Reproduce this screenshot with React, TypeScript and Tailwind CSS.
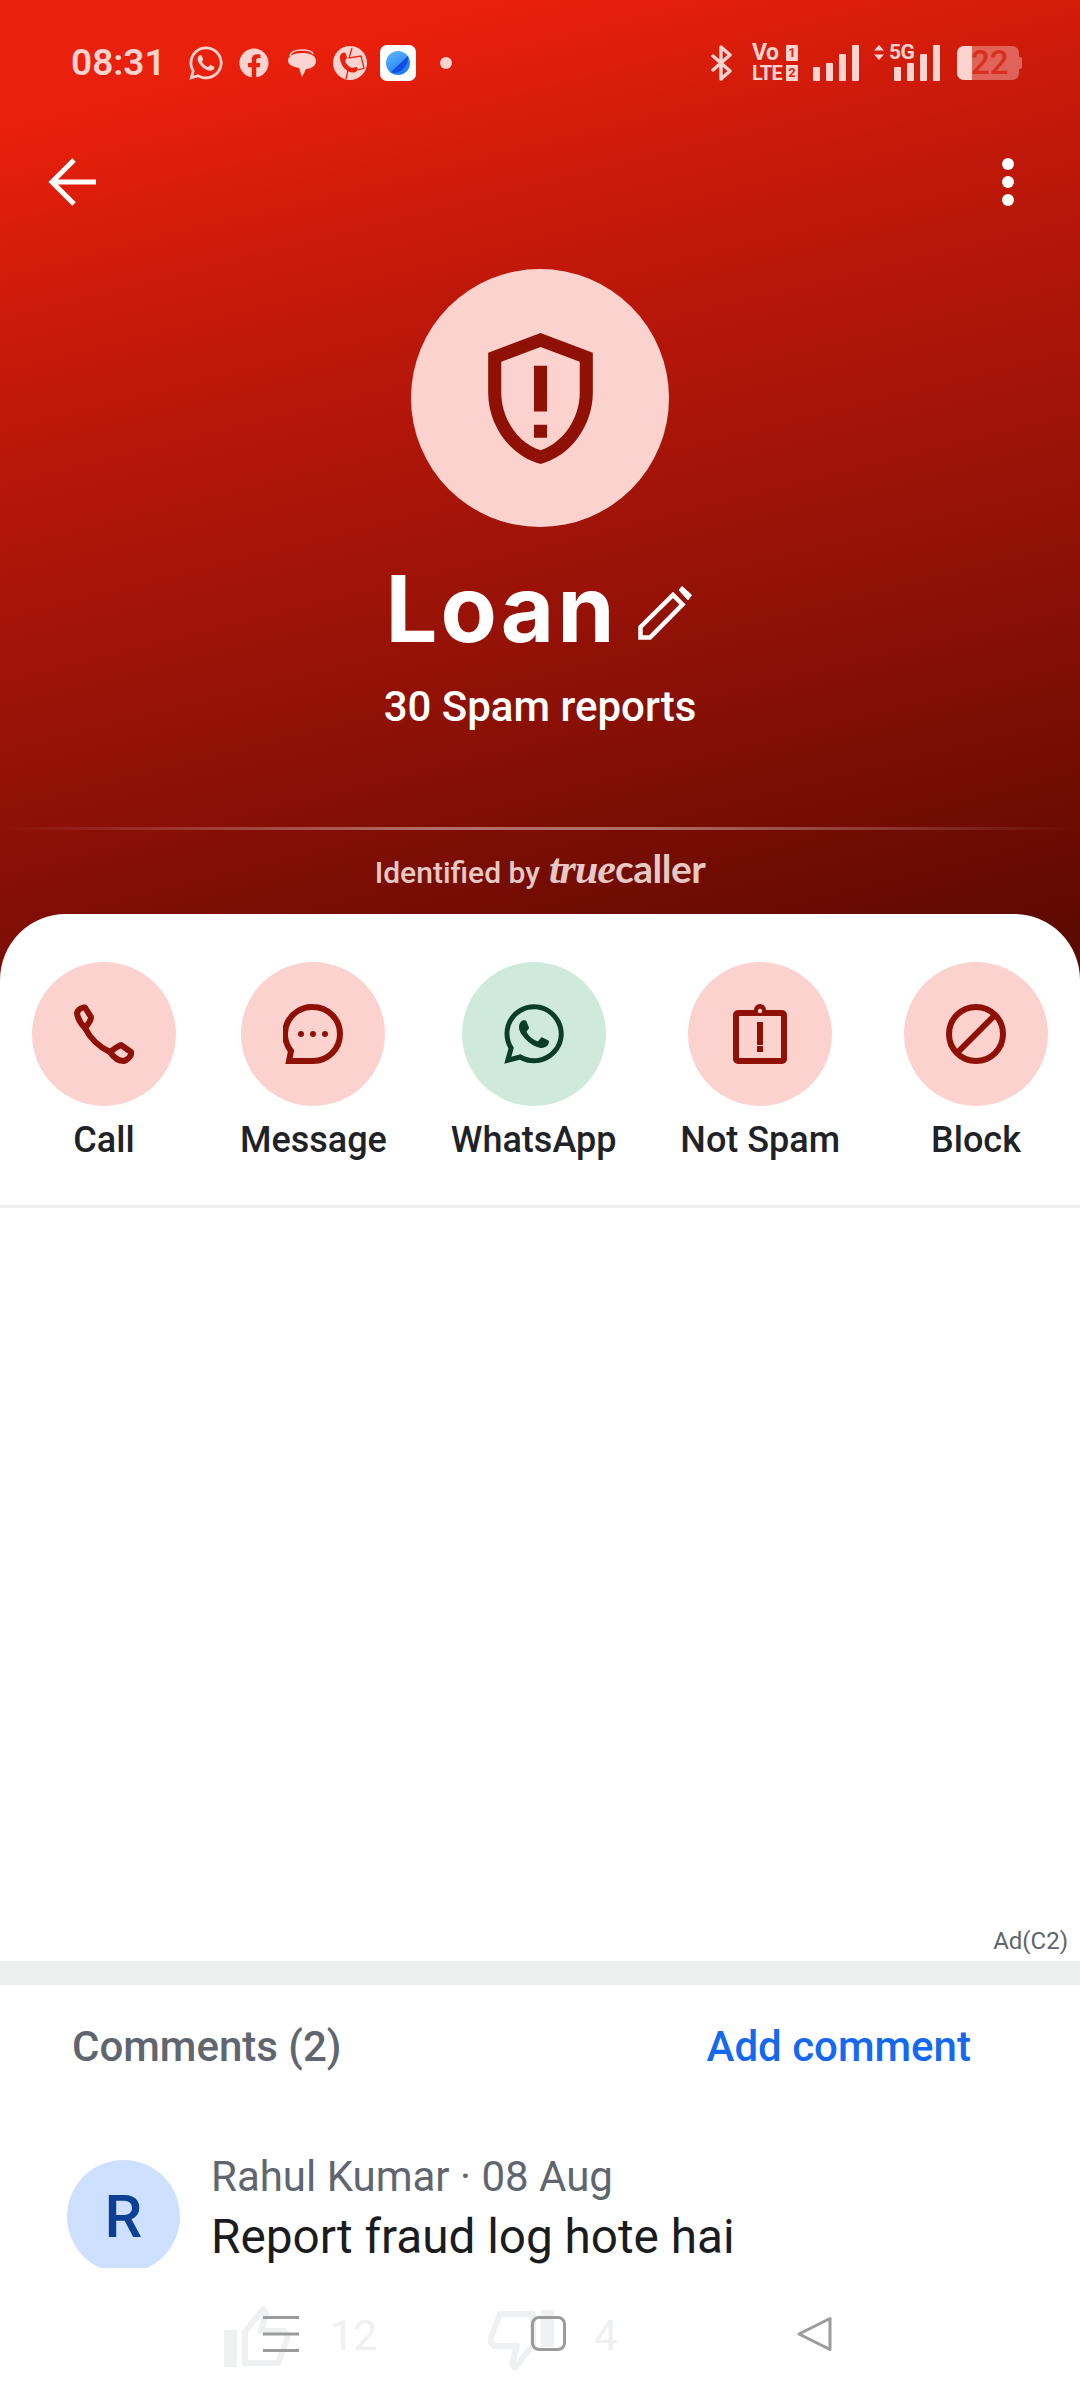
import React from "react";
import { FaWhatsapp, FaFacebook } from "react-icons/fa";

const Bars = () => (
  <div className="flex items-end gap-[6px] h-[36px]">
    <div className="w-[7px] h-[14px] rounded-[1px] bg-[#fdd3cf]" />
    <div className="w-[7px] h-[18px] rounded-[1px] bg-[#fdd3cf]" />
    <div className="w-[7px] h-[27px] rounded-[1px] bg-[#fdd3cf]" />
    <div className="w-[7px] h-[36px] rounded-[1px] bg-[#fdd3cf]" />
  </div>
);

const StatusBar = () => (
  <div className="flex items-center h-[36px] mt-[45px] pl-[71px] font-['Roboto',sans-serif] text-[#fdd3cf]">
    <span className="w-[91px] text-[37px] leading-[36px] font-semibold whitespace-nowrap">08:31</span>
    <FaWhatsapp className="ml-[25px] w-[38px] h-[38px]" />
    <FaFacebook className="ml-[14px] w-[30px] h-[30px]" />
    <svg viewBox="0 0 29 28" className="ml-[18px] w-[29px] h-[28px]">
      <path d="M3 7C4 2 9 1 15 1s10 1 11 4" fill="none" stroke="#fdd3cf" strokeWidth="1.6" />
      <path d="M15 4c8 0 14 2.500 14 8s-6 8-10 8l-4 8-3-9C6 18 1 16 1 11.500 1 7 7 4 15 4z" fill="#fdd3cf" />
    </svg>
    <svg viewBox="0 0 34 34" className="ml-[17px] w-[34px] h-[34px]">
      <circle cx="17" cy="17" r="17" fill="#fdd3cf" />
      <path d="M8 8c2-2 4-2 5 0l1 4-2 3c1 3 4 6 7 7l4-1c2 0 2 2 1 4-4 3-9 1-12-2S5 12 8 8z" fill="#e9200c" />
      <path d="M19 2l-3 10 12-2 3 12-6 2M15 24l-2 9" fill="none" stroke="#e9200c" strokeWidth="1.300" />
    </svg>
    <div className="ml-[13px] w-[36px] h-[36px] rounded-[7px] bg-white flex items-center justify-center">
      <svg viewBox="0 0 28 28" className="w-[28px] h-[28px]">
        <defs>
          <linearGradient id="planet" x1="0.2" y1="0" x2="0.8" y2="1">
            <stop offset="0" stopColor="#5cb6ff" />
            <stop offset="1" stopColor="#1a73f5" />
          </linearGradient>
        </defs>
        <circle cx="14" cy="14" r="12" fill="url(#planet)" />
        <path d="M6.500 23.500L24 7c2 8-7 19-17.500 16.500z" fill="#0f4fe0" />
      </svg>
    </div>
    <div className="ml-[24px] w-[12px] h-[12px] rounded-full bg-[#fdd3cf]" />

    <svg viewBox="0 0 21 36" className="ml-[259px] w-[21px] h-[36px]">
      <path d="M2 11l17 15-9 8V2l9 8L2 25" fill="none" stroke="#fdd3cf" strokeWidth="3.400" strokeLinecap="round" strokeLinejoin="round" />
    </svg>
    <div className="ml-[20px] w-[46px] h-[36px] flex flex-col justify-between font-bold leading-[16px]">
      <div className="flex justify-between items-center h-[16px]">
        <span className="text-[23px] leading-[16px] tracking-[-0.5px]">Vo</span>
        <span className="w-[12px] h-[16px] rounded-[1px] bg-[#fdd3cf] text-[#e9200c] text-[13px] leading-[16px] text-center">1</span>
      </div>
      <div className="flex justify-between items-center h-[16px]">
        <span className="tracking-[-0.8px] text-[20px] leading-[16px]">LTE</span>
        <span className="w-[12px] h-[16px] bg-[#fdd3cf] text-[#e9200c] text-[13px] leading-[16px] text-center">2</span>
      </div>
    </div>
    <div className="ml-[15px]">
      <Bars />
    </div>
    <div className="relative ml-[15px] w-[66px] h-[36px] flex items-end justify-end">
      <Bars />
      <svg viewBox="0 0 10 15" className="absolute left-0 top-0 w-[10px] h-[15px]">
        <path d="M5 0l5 5.500H0zM5 15L0 9.500h10z" fill="#fdd3cf" />
      </svg>
      <span className="absolute left-[15px] top-[-1px] text-[21px] leading-[17px] font-bold tracking-[-0.5px]">5G</span>
    </div>
    <div className="relative ml-[17px] w-[65px] h-[34px] flex">
      <div className="w-[62px] h-[34px] rounded-[7px] bg-[#fdd3cf]/40 overflow-hidden">
        <div className="w-[15px] h-[34px] bg-[#fdd3cf]" />
      </div>
      <div className="w-[3px] h-[12px] mt-[11px] rounded-r-[2px] bg-[#fdd3cf]/40" />
      <span className="absolute left-[14px] top-0 text-[33px] leading-[34px] font-medium text-[#d92f20]">22</span>
    </div>
  </div>
);

const Toolbar = () => (
  <div className="flex items-center justify-between h-[48px] mt-[77px] pl-[48px] pr-[66px]">
    <svg viewBox="0 0 48 48" className="w-[48px] h-[48px]">
      <path d="M48 24H4M26 2L4 24l22 22" fill="none" stroke="#ffffff" strokeWidth="5" />
    </svg>
    <div className="flex flex-col gap-[6px]">
      <div className="w-[12px] h-[12px] rounded-full bg-white" />
      <div className="w-[12px] h-[12px] rounded-full bg-white" />
      <div className="w-[12px] h-[12px] rounded-full bg-white" />
    </div>
  </div>
);

const Title = () => (
  <div className="flex flex-col items-center mt-[63px]">
    <div className="w-[258px] h-[258px] rounded-full bg-[#fbd2ce] flex items-center justify-center">
      <svg viewBox="0 0 24 24" className="w-[157px] h-[157px]">
        <path
          fill="#8f1105"
          d="M12,2L4,5v6.090c0,5.050,3.410,9.760,8,10.910c4.590-1.150,8-5.860,8-10.910V5L12,2z M18,11.090c0,4-2.550,7.700-6,8.830 c-3.450-1.130-6-4.820-6-8.830v-4.700l6-2.250l6,2.250V11.090z M11,16h2v2h-2V16z M11,7h2v7h-2V7z"
        />
      </svg>
    </div>
    <div className="flex items-center h-[110px] mt-[27px] mr-[3px]">
      <span className="font-['Inter',sans-serif] font-bold text-[92px] leading-[110px] text-white tracking-[3px]">Loan</span>
      <svg viewBox="0 0 54 54" className="ml-[20px] mt-[8px] w-[54px] h-[54px]">
        <path d="M2.500 41L35 9l9.500 9.500L12 51.500H2.500z" fill="none" stroke="#ffffff" strokeWidth="4.500" strokeLinejoin="miter" />
        <path d="M41 4l3-3.500 9.500 8.500-3.500 5z" fill="#ffffff" stroke="#ffffff" strokeWidth="1" strokeLinejoin="round" />
      </svg>
    </div>
    <div className="mt-[19px] font-['Roboto',sans-serif] font-medium text-[42px] leading-[48px] text-white">30 Spam reports</div>
  </div>
);

const Identified = () => (
  <div className="flex flex-col items-center mt-[96px]">
    <div className="w-full h-[3px] bg-[linear-gradient(90deg,transparent,#ffffff66_40%,#ffffff66_60%,transparent)]" />
    <div className="flex items-baseline mt-[18px] h-[40px] text-[#e6c8c6] font-['Roboto',sans-serif] text-[30px] leading-[40px] font-medium">
      <span>Identified by</span>
      <span className="ml-[9px] font-['Liberation_Serif',serif] italic font-bold text-[42px] leading-[40px] tracking-[-1px]">true</span>
      <span className="font-['Lato',sans-serif] font-bold text-[39px] leading-[40px] tracking-[-0.5px]">caller</span>
    </div>
  </div>
);

const icons = {
  call: (
    <svg viewBox="0 0 60 60" className="w-[60px] h-[60px]">
      <g fill="none" stroke="#8f1105" strokeWidth="6" strokeLinejoin="round">
        <path d="M3 9Q4 5 9 3.500L11 3.500L17 13Q17 17 11 24Q4 17 3 9Z" />
        <path d="M11 24Q19 40 36 48" />
        <path d="M36 48Q42 43 47 41L57 48Q58 52 52 56L50 57Q42 57 36 48Z" />
      </g>
    </svg>
  ),
  message: (
    <svg viewBox="0 0 60 60" className="w-[60px] h-[60px]">
      <path d="M30 3A27 27 0 0 1 30 57H6L8 47A27 27 0 0 1 30 3Z" fill="none" stroke="#8f1105" strokeWidth="6" />
      <circle cx="18" cy="30" r="3" fill="#8f1105" />
      <circle cx="30" cy="30" r="3" fill="#8f1105" />
      <circle cx="42" cy="30" r="3" fill="#8f1105" />
    </svg>
  ),
  whatsapp: <FaWhatsapp className="w-[68px] h-[68px] text-[#0c3d28]" />,
  notSpam: (
    <svg viewBox="0 0 54 60" className="w-[54px] h-[60px]">
      <rect x="3" y="9" width="48" height="48" rx="2" fill="none" stroke="#8f1105" strokeWidth="6" />
      <circle cx="27" cy="6" r="6" fill="#8f1105" />
      <circle cx="27" cy="7" r="2.200" fill="#fbd2ce" />
      <rect x="24" y="18" width="6" height="23" fill="#8f1105" />
      <rect x="24" y="42" width="6" height="6" fill="#8f1105" />
    </svg>
  ),
  block: (
    <svg viewBox="0 0 60 60" className="w-[60px] h-[60px]">
      <circle cx="30" cy="30" r="27" fill="none" stroke="#8f1105" strokeWidth="6" />
      <path d="M49 11L11 49" stroke="#8f1105" strokeWidth="6" />
    </svg>
  ),
};

const Action = ({ icon, label, green }: { icon: React.ReactNode; label: string; green?: boolean }) => (
  <div className="flex flex-col items-center">
    <div className={`w-[144px] h-[144px] rounded-full flex items-center justify-center ${green ? "bg-[#cfeadc]" : "bg-[#fbd2ce]"}`}>{icon}</div>
    <span className="mt-[10px] font-['Roboto',sans-serif] font-[480] text-[36px] leading-[48px] text-[#1f2328] whitespace-nowrap">{label}</span>
  </div>
);

const Thumb = ({ down }: { down?: boolean }) => (
  <svg viewBox="0 0 66 62" className={`w-[66px] h-[62px] ${down ? "rotate-180 mt-[10px]" : ""}`}>
    <rect x="0" y="25" width="13" height="37" fill="#eef0f1" />
    <path d="M21 58V27L39 4l3 4-5 18h23l4 6-10 26z" fill="none" stroke="#eef0f1" strokeWidth="6" strokeLinejoin="round" />
  </svg>
);

const NavBar = () => (
  <div className="absolute left-0 right-0 bottom-0 h-[132px] bg-white font-['Roboto',sans-serif]">
    <div className="flex items-center pl-[224px] pt-[35px] h-[100px]">
      <Thumb />
      <span className="ml-[40px] w-[50px] text-[42px] leading-[50px] text-[#eef0f1]">12</span>
      <div className="ml-[108px]">
        <Thumb down />
      </div>
      <span className="ml-[40px] text-[42px] leading-[50px] text-[#eef0f1]">4</span>
    </div>
    <svg viewBox="0 0 36 36" className="absolute left-[263px] top-[48px] w-[36px] h-[36px]">
      <path d="M0 1.500H36M0 18H36M0 34.500H36" stroke="#9b9b9b" strokeWidth="3" />
    </svg>
    <div className="absolute left-[531px] top-[48px] w-[35px] h-[35px] rounded-[8px] border-[3px] border-[#9b9b9b]" />
    <svg viewBox="0 0 36 36" className="absolute left-[797px] top-[48px] w-[36px] h-[36px]">
      <path d="M33 2.500V33.500L2 18Z" fill="none" stroke="#9b9b9b" strokeWidth="3" strokeLinejoin="round" />
    </svg>
  </div>
);

export default function App() {
  return (
    <div className="relative w-[1080px] h-[2400px] overflow-hidden bg-white font-['Roboto',sans-serif]">
      <div className="h-[990px] flex flex-col bg-[linear-gradient(166deg,#e9200b_10%,#c0180a_32%,#8a1006_68%,#560800_100%)]">
        <StatusBar />
        <Toolbar />
        <Title />
        <Identified />
      </div>
      <div className="relative -mt-[76px] bg-white rounded-t-[66px]">
        <div className="flex justify-between pl-[32px] pr-[32px] pt-[48px] h-[294px] border-b-[3px] border-[#eef0f1]">
          <Action icon={icons.call} label="Call" />
          <Action icon={icons.message} label="Message" />
          <Action icon={icons.whatsapp} label="WhatsApp" green />
          <Action icon={icons.notSpam} label="Not Spam" />
          <Action icon={icons.block} label="Block" />
        </div>
        <div className="h-[753px] flex items-end justify-end pr-[12px] pb-[6px]">
          <span className="text-[24px] leading-[28px] text-[#60656c]">Ad(C2)</span>
        </div>
        <div className="h-[24px] bg-[#eef0f0]" />
        <div className="flex justify-between items-center pl-[72px] pr-[109px] mt-[37px] h-[50px]">
          <span className="text-[42px] leading-[50px] font-medium text-[#5f6670]">Comments (2)</span>
          <span className="text-[42px] leading-[50px] font-medium text-[#1469f0]">Add comment</span>
        </div>
        <div className="flex pl-[67px] mt-[88px]">
          <div className="w-[113px] h-[113px] rounded-full bg-[#cde0ff] flex items-center justify-center text-[#0d3f94] font-medium text-[60px]">R</div>
          <div className="ml-[31px] -mt-[8px] flex flex-col">
            <span className="text-[42px] leading-[50px] text-[#5f6670]">Rahul Kumar · 08 Aug</span>
            <span className="mt-[6px] text-[47.7px] leading-[58px] text-[#1a1c1f]">Report fraud log hote hai</span>
          </div>
        </div>
      </div>
      <NavBar />
    </div>
  );
}
